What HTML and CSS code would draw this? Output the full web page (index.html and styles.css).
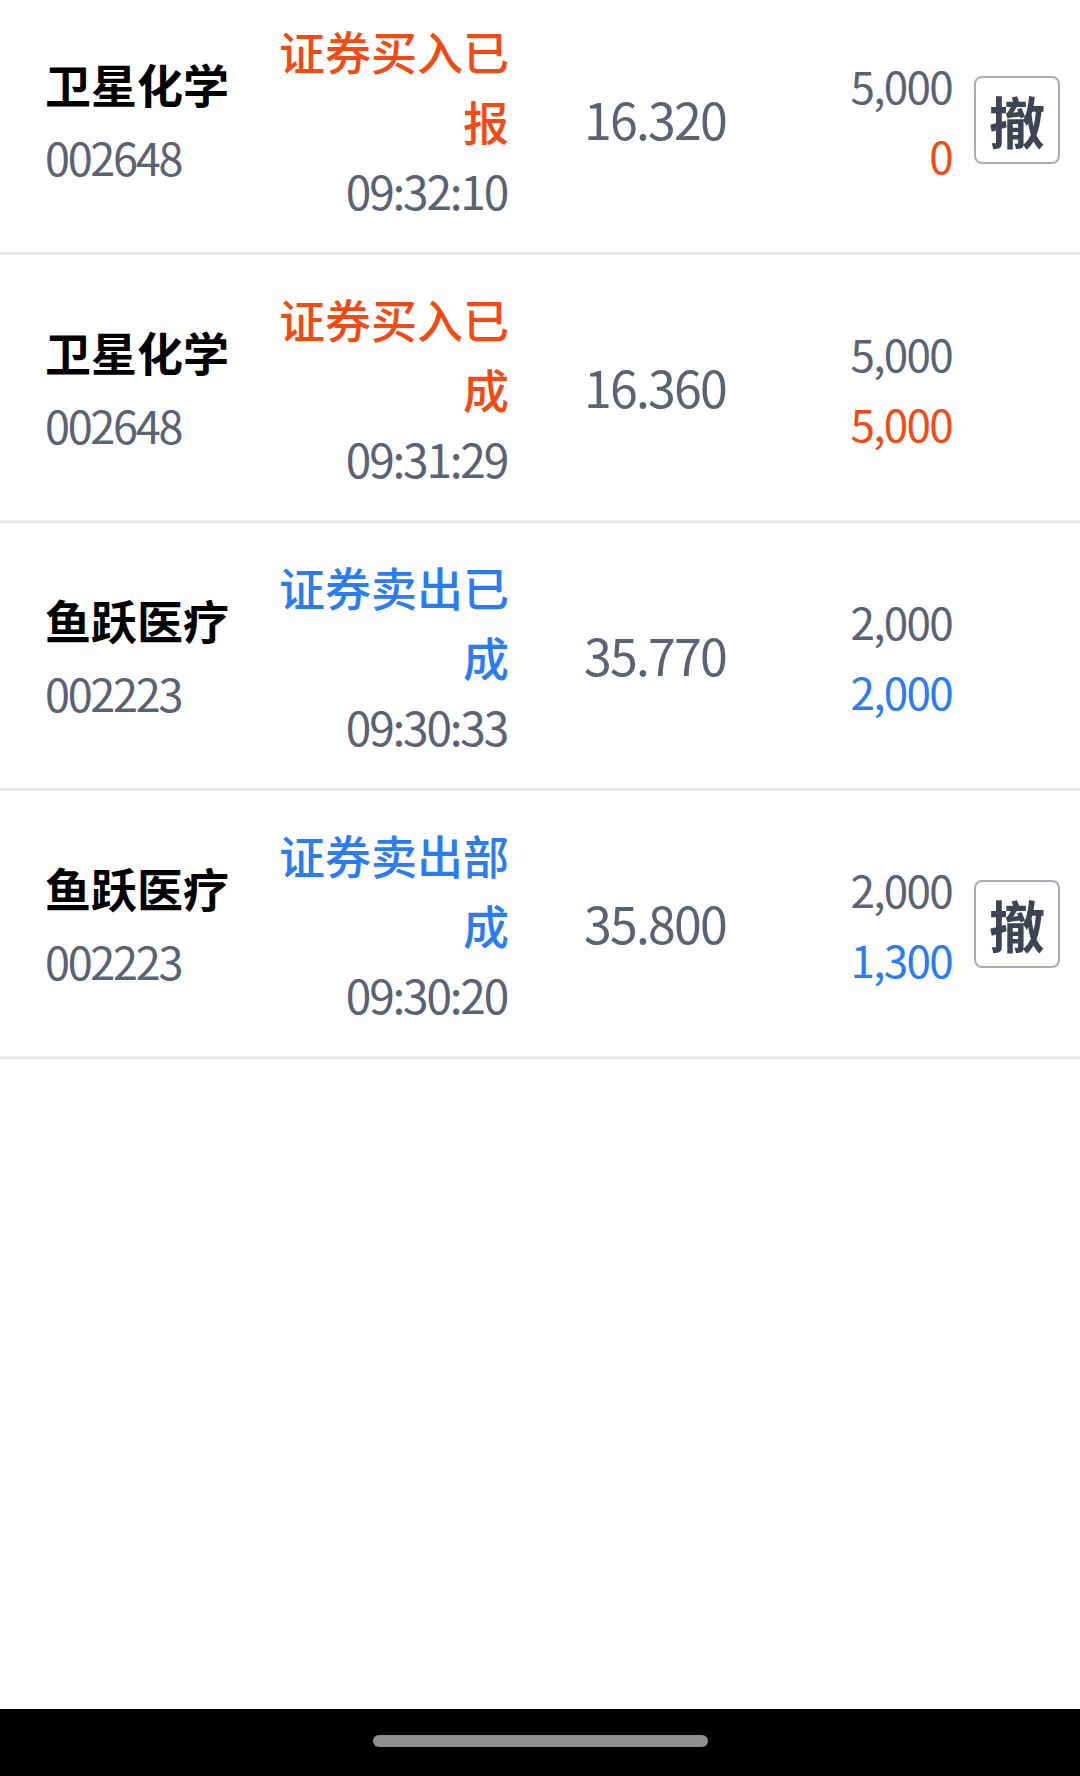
FILE: index.html
```html
<!DOCTYPE html>
<html lang="zh-CN">
<head>
    <meta charset="UTF-8">
    <meta name="viewport" content="width=device-width, initial-scale=1.0">
    <title>当日委托</title>
    <link rel="stylesheet" href="styles.css">
</head>
<body>
<div class="page">
    <div class="orders">
        <div class="order">
            <div class="stock">
                <div class="stock-name">卫星化学</div>
                <div class="stock-code">002648</div>
            </div>
            <div class="status">
                <div class="status-text buy">证券买入已报</div>
                <div class="time">09:32:10</div>
            </div>
            <div class="price">16.320</div>
            <div class="qty">
                <div>5,000</div>
                <div class="buy">0</div>
            </div>
            <div class="action"><button class="cancel-btn">撤</button></div>
        </div>

        <div class="order">
            <div class="stock">
                <div class="stock-name">卫星化学</div>
                <div class="stock-code">002648</div>
            </div>
            <div class="status">
                <div class="status-text buy">证券买入已成</div>
                <div class="time">09:31:29</div>
            </div>
            <div class="price">16.360</div>
            <div class="qty">
                <div>5,000</div>
                <div class="buy">5,000</div>
            </div>
            <div class="action"></div>
        </div>

        <div class="order">
            <div class="stock">
                <div class="stock-name">鱼跃医疗</div>
                <div class="stock-code">002223</div>
            </div>
            <div class="status">
                <div class="status-text sell">证券卖出已成</div>
                <div class="time">09:30:33</div>
            </div>
            <div class="price">35.770</div>
            <div class="qty">
                <div>2,000</div>
                <div class="sell">2,000</div>
            </div>
            <div class="action"></div>
        </div>

        <div class="order">
            <div class="stock">
                <div class="stock-name">鱼跃医疗</div>
                <div class="stock-code">002223</div>
            </div>
            <div class="status">
                <div class="status-text sell">证券卖出部成</div>
                <div class="time">09:30:20</div>
            </div>
            <div class="price">35.800</div>
            <div class="qty">
                <div>2,000</div>
                <div class="sell">1,300</div>
            </div>
            <div class="action"><button class="cancel-btn">撤</button></div>
        </div>
    </div>

    <div class="nav-bar">
        <div class="nav-handle"></div>
    </div>
</div>
</body>
</html>
```

FILE: styles.css
```css
body {
    margin: 0;
    font-family: "Noto Sans CJK SC", "Noto Sans", sans-serif;
    background-color: #ffffff;
    color: #5b6274;
}

.page {
    display: flex;
    flex-direction: column;
    height: 100vh;
    overflow: hidden;
}

/* list is scrolled a little, first row is cut at the top */
.orders {
    margin-top: -13px;
}

.order {
    display: grid;
    grid-template-columns: 217px 247px 1fr 202px 108px;
    align-items: center;
    padding: 28px 20px 27px 45px;
    border-bottom: 3px solid #e6e8ec;
}

.stock-name {
    font-size: 46px;
    font-weight: bold;
    color: #000000;
    line-height: 68px;
}

.stock-code {
    font-size: 45px;
    line-height: 70px;
    padding-top: 5px;
    letter-spacing: -2.3px;
}

.status {
    text-align: right;
    line-height: 70px;
}

.status-text {
    font-size: 46px;
    font-weight: 500;
}

.time {
    font-size: 46px;
    letter-spacing: -2.2px;
    padding-right: 2px;
}

.buy {
    color: #f24a12;
}

.sell {
    color: #2b7cf2;
}

.price {
    font-size: 50px;
    line-height: 70px;
    padding-left: 75px;
    padding-bottom: 4px;
    letter-spacing: -1.8px;
}

.qty {
    font-size: 44px;
    line-height: 70px;
    text-align: right;
    letter-spacing: -1.7px;
}

.action {
    display: flex;
    justify-content: flex-end;
}

.cancel-btn {
    width: 86px;
    height: 88px;
    padding: 0;
    border: 2px solid #a8acb3;
    border-radius: 8px;
    background-color: #ffffff;
    color: #3e4454;
    font-family: "Noto Sans CJK SC", sans-serif;
    font-size: 56px;
    font-weight: bold;
    line-height: 1;
}

.nav-bar {
    margin-top: auto;
    height: 67px;
    background-color: #000000;
    display: flex;
    justify-content: center;
    padding-top: 26px;
    box-sizing: border-box;
}

.nav-handle {
    width: 335px;
    height: 12px;
    border-radius: 6px;
    background-color: #8e8e8e;
}
```
